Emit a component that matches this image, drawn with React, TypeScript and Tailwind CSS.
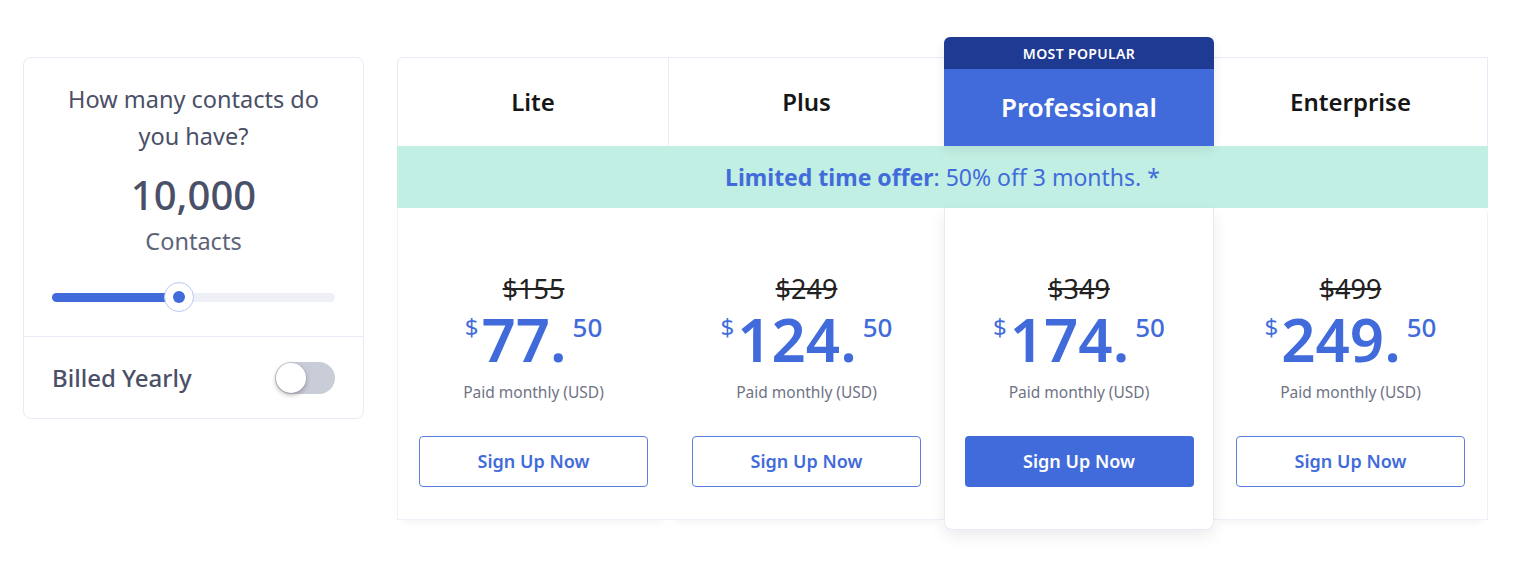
import React from "react";

const PLANS: Array<{ name: string; was: string; whole: string; width: string; featured?: boolean }> = [
	{ name: "Lite", was: "$155", whole: "77", width: "w-[272px]" },
	{ name: "Plus", was: "$249", whole: "124", width: "w-[275px]" },
	{ name: "Professional", was: "$349", whole: "174", width: "w-[270px]", featured: true },
	{ name: "Enterprise", was: "$499", whole: "249", width: "w-[274px]" },
];

function ContactsCard(): JSX.Element {
	return (
		<div className="mt-[20px] w-[341px] rounded-lg border border-[#e6ebf7] bg-white text-[#4a5067]">
			<div className="flex flex-col items-center px-[28px] pt-[23px] pb-[24px]">
				<div className="text-center text-[23.5px] leading-[37px]">
					How many contacts do
					<br />
					you have?
				</div>
				<div className="mt-[18px] text-[40px] font-medium leading-[44px]">10,000</div>
				<div className="mt-[9px] text-[23.5px] leading-[30px] text-[#5d6478]">Contacts</div>
				<div className="relative mt-[26px] flex h-[30px] w-full items-center">
					<div className="h-[9px] w-full rounded-full bg-[#eef0f5]">
						<div className="h-full w-[127px] rounded-full bg-[#416bdb]" />
					</div>
					<div className="absolute left-[112px] top-0 flex h-[30px] w-[30px] items-center justify-center rounded-full border border-[#b9c9f1] bg-white">
						<div className="h-[12px] w-[12px] rounded-full bg-[#416bdb]" />
					</div>
				</div>
			</div>
			<div className="flex h-[82px] items-center justify-between border-t border-[#e6ebf7] px-[28px]">
				<span className="text-[24px] font-medium">Billed Yearly</span>
				<div className="flex h-[32px] w-[60px] items-center rounded-full bg-[#c9cdd8] px-[1px]">
					<div className="h-[30px] w-[30px] rounded-full bg-white shadow-[0_2px_5px_rgba(0,0,0,0.3)]" />
				</div>
			</div>
		</div>
	);
}

function PlanHeader(props: { name: string; width: string; featured?: boolean; first?: boolean; last?: boolean }): JSX.Element {
	const { name, width, featured, first, last } = props;
	if (featured) {
		return (
			<div className={`${width} relative z-10 overflow-hidden rounded-t-md shadow-[0_4px_12px_rgba(0,0,0,0.08)]`}>
				<div className="flex h-[32px] items-center justify-center bg-[#1f3a93] text-[14px] font-semibold tracking-wide text-white">
					MOST POPULAR
				</div>
				<div className="flex h-[77px] items-center justify-center bg-[#416bdb] text-[26px] font-semibold text-white">
					{name}
				</div>
			</div>
		);
	}
	return (
		<div
			className={`${width} flex h-[89px] items-center justify-center border-t border-[#e6ebf7] bg-white text-[24px] font-semibold text-[#161616] ${
				first ? "rounded-tl-md border-l border-r" : ""
			} ${last ? "border-r" : ""}`}
		>
			{name}
		</div>
	);
}

function PlanBody(props: { was: string; whole: string; width: string; featured?: boolean; first?: boolean; last?: boolean }): JSX.Element {
	const { was, whole, width, featured, first, last } = props;
	return (
		<div
			className={`${width} flex flex-col items-center bg-white ${
				featured
					? "relative z-10 h-[322px] rounded-b-lg border-x border-b border-[#e6ebf7] shadow-[0_6px_16px_rgba(0,0,0,0.08)]"
					: "h-[312px] border-b border-[#eef1f8] shadow-[0_8px_8px_-6px_rgba(0,0,0,0.06)]"
			} ${last ? "rounded-tr-md border-r border-[#e6ebf7]" : ""} ${first ? "border-l border-[#eef1f8]" : ""}`}
		>
			<div className="mt-[67px] text-[27px] leading-[28px] text-[#222] line-through decoration-[1.5px]">{was}</div>
			<div className="mt-[6px] flex items-start text-[#416bdb]">
				<span className="mt-[6px] mr-[3px] text-[24px] leading-none">$</span>
				<span className="text-[60px] font-semibold leading-none">{whole}.</span>
				<span className="mt-[5px] ml-[6px] text-[26px] font-medium leading-none">50</span>
			</div>
			<div className="mt-[13px] text-[15.5px] leading-[20px] text-[#6f7385]">Paid monthly (USD)</div>
			<button
				className={`mt-[34px] h-[51px] w-[229px] rounded-[4px] text-[18px] font-semibold ${
					featured ? "bg-[#416bdb] text-white" : "border-[1.5px] border-[#5a7fe0] bg-white text-[#416bdb]"
				}`}
			>
				Sign Up Now
			</button>
		</div>
	);
}

export default function App(): JSX.Element {
	return (
		<div className="min-h-[568px] bg-white font-['Noto_Sans',sans-serif]">
			<div className="flex items-start pl-[23px] pt-[37px]">
				<ContactsCard />
				<div className="ml-[33px] flex flex-col">
					<div className="flex items-end">
						{PLANS.map((p, i) => (
							<PlanHeader key={p.name} name={p.name} width={p.width} featured={p.featured} first={i === 0} last={i === PLANS.length - 1} />
						))}
					</div>
					<div className="flex h-[62px] items-center justify-center bg-[#c2efe3] text-[23px] text-[#416bdb]">
						<span className="font-bold">Limited time offer</span>
						<span>: 50% off 3 months. *</span>
					</div>
					<div className="flex items-start">
						{PLANS.map((p, i) => (
							<PlanBody
								key={p.name}
								was={p.was}
								whole={p.whole}
								width={p.width}
								featured={p.featured}
								first={i === 0}
								last={i === PLANS.length - 1}
							/>
						))}
					</div>
				</div>
			</div>
		</div>
	);
}
